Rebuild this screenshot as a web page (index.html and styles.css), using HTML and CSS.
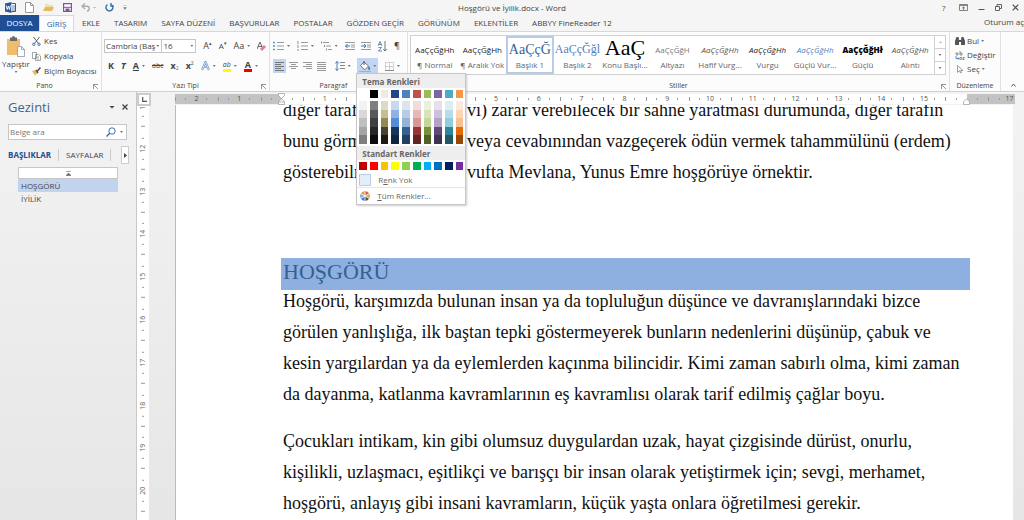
FILE: index.html
```html
<!DOCTYPE html>
<html lang="tr">
<head>
<meta charset="utf-8">
<title>Hoşgörü ve İyilik.docx - Word</title>
<link rel="stylesheet" href="styles.css">
</head>
<body>
<div class="app">
  <header class="titlebar">
    <div class="quick">
      <svg width="11" height="11" viewBox="0 0 11 11"><path d="M0 1.5L6.500 0v11L0 9.500z" fill="#2b579a"/><path d="M6.500 1.500h4v8h-4" fill="#fff" stroke="#2b579a"/><path d="M7 4h3M7 6h3M7 8h3" stroke="#2b579a" stroke-width=".7"/><path d="M1.200 3.500l1 4 1.100-3.500 1.100 3.500 1-4" fill="none" stroke="#fff" stroke-width=".9"/></svg>
      <button aria-label="Yeni"><svg width="9" height="11" viewBox="0 0 9 11"><path d="M.5.5h5l3 3v7h-8zM5.500.5v3h3" fill="#fff" stroke="#999"/></svg></button>
      <button aria-label="Aç"><svg width="11" height="9" viewBox="0 0 11 9"><path d="M2 1h3l1 1h4v3H2z" fill="#f3dfae"/><path d="M0 8l2-4h9L9 8z" fill="#e5b95c"/></svg></button>
      <button aria-label="Kaydet"><svg width="9" height="9" viewBox="0 0 9 9"><path d="M.6.600h7.800v7.800H.6z" fill="#fff" stroke="#80539f" stroke-width="1.200"/><path d="M2.500 5.500h4v3h-4z" fill="#80539f"/><path d="M1 4.300h7" stroke="#80539f"/></svg></button>
      <button class="wide" aria-label="Geri al"><svg width="15" height="9" viewBox="0 0 15 9"><path d="M4 .5L1 3.200 4 6M1 3.200h5c3 0 3 4.500 0 4.800" fill="none" stroke="#a9adb3" stroke-width="1.400"/><path d="M12 4h3l-1.500 1.500z" fill="#aaa"/></svg></button>
      <button aria-label="Yinele"><svg width="9" height="9" viewBox="0 0 9 9"><path d="M6 1.300A3.500 3.500 0 1 1 2.500 1.500M6 0v3h2.800" fill="none" stroke="#2f6fab" stroke-width="1.400"/></svg></button>
      <button aria-label="Özelleştir"><svg width="4" height="5" viewBox="0 0 4 5"><path d="M.5.5h3M.5 2.500h3L2 4.500z" fill="#666" stroke="#888" stroke-width=".4"/></svg></button>
    </div>
    <div class="doctitle">Hoşgörü ve İyilik.docx - Word</div>
    <div class="winbtns">
      <button aria-label="Yardım">?</button>
      <button aria-label="Şerit görünümü"><svg width="9" height="7" viewBox="0 0 9 7"><path d="M.5.5h8v6h-8zM1 1.500h7M4.500 6V3M3 4.300L4.500 3 6 4.300" fill="none" stroke="#666" stroke-width=".8"/></svg></button>
      <button aria-label="Simge durumuna küçült"><svg width="7" height="7" viewBox="0 0 7 7"><path d="M.5 5.500h6" stroke="#555"/></svg></button>
      <button aria-label="Geri yükle"><svg width="7" height="7" viewBox="0 0 7 7"><path d="M.5 2.500h4v4h-4zM2 2.500v-2h4.500v4H4.500" fill="none" stroke="#555" stroke-width=".9"/></svg></button>
      <button aria-label="Kapat"><svg width="7" height="7" viewBox="0 0 7 7"><path d="M.7.700l5.600 5.600M6.300.700L.7 6.300" stroke="#444" stroke-width="1.100"/></svg></button>
    </div>
  </header>
  <nav class="tabs">
    <button class="file">DOSYA</button>
    <button class="active">GİRİŞ</button>
    <button>EKLE</button>
    <button>TASARIM</button>
    <button>SAYFA DÜZENİ</button>
    <button>BAŞVURULAR</button>
    <button>POSTALAR</button>
    <button>GÖZDEN GEÇİR</button>
    <button>GÖRÜNÜM</button>
    <button>EKLENTİLER</button>
    <button>ABBYY FineReader 12</button>
    <a class="signin" href="#">Oturum aç</a>
  </nav>
  <section class="ribbon">
    <div class="group clipboard">
      <div class="body">
        <button class="paste"><svg width="20" height="21" viewBox="0 0 20 21"><path d="M1 3h13v16H1z" fill="#f0bd6e"/><path d="M4 1.500h2a1.500 1.500 0 0 1 3 0h2V5H4z" fill="#6b6b6b"/><path d="M11.500 10.500h4l3 3v7h-7zM15.500 10.500v3h3" fill="#fff" stroke="#8b98a8" stroke-width=".8"/></svg><span>Yapıştır</span><i class="caret"></i></button>
        <div class="cliplist">
          <button><svg width="9" height="9" viewBox="0 0 9 9"><path d="M1.500 0l5 6.500M7.500 0l-5 6.500" stroke="#666"/><circle cx="1.800" cy="7.300" r="1.200" fill="none" stroke="#3c72a8"/><circle cx="7" cy="7.300" r="1.200" fill="none" stroke="#3c72a8"/></svg>Kes</button>
          <button><svg width="9" height="9" viewBox="0 0 9 9"><path d="M.5.5h4v6h-4zM3.500 2.500h3l2 1.500v4.500h-5zM5 5h2M5 7h2" fill="#fff" stroke="#8a8f96" stroke-width=".8"/></svg>Kopyala</button>
          <button><svg width="9" height="9" viewBox="0 0 9 9"><path d="M0 4l4-1 2 3-3 2.500z" fill="#eeb759"/><path d="M4 3l2 3M5.500 4L8.500.5" stroke="#555" stroke-width="1.500"/></svg>Biçim Boyacısı</button>
        </div>
      </div>
      <div class="label">Pano<i class="launch"></i></div>
    </div>
    <div class="group font">
      <div class="body rows">
        <div class="row">
          <div class="combos"><button class="combo name">Cambria (Baş<i class="caret"></i></button><button class="combo size"><span>16</span><i class="caret"></i></button></div>
          <button class="glyph">A<sup>▴</sup></button><button class="glyph small">A<sup>▾</sup></button>
          <button class="glyph">Aa<i class="caret"></i></button>
          <button><svg width="9" height="11" viewBox="0 0 9 11"><path d="M0 8L3 1l3 7M1 5.500h4" fill="none" stroke="#666"/><path d="M3 8l4-4 2 2-4 4z" fill="#e5799a"/></svg></button>
        </div>
        <div class="row fmt">
          <button><b>K</b></button><button><b><em>T</em></b></button><button><b><u>A</u></b><i class="caret"></i></button><button class="strike">abc</button><button><b>x</b><sub>2</sub></button><button><b>x</b><sup>2</sup></button>
          <button><svg width="9" height="10" viewBox="0 0 9 10"><path d="M1 9L4.500 1 8 9M2.500 6h4" fill="none" stroke="#5b92d0" stroke-width="2"/><path d="M1 9L4.500 1 8 9M2.500 6h4" fill="none" stroke="#fff" stroke-width=".7"/></svg><i class="caret"></i></button>
          <button class="hl"><span>ab</span><i class="caret"></i></button>
          <button class="fc"><b>A</b><i class="caret"></i></button>
        </div>
      </div>
      <div class="label">Yazı Tipi<i class="launch"></i></div>
    </div>
    <div class="group para">
      <div class="body rows">
        <div class="row">
          <button><svg width="11" height="10" viewBox="0 0 11 10"><path d="M0 1.500h2M0 5h2M0 8.500h2" stroke="#6b93bd" stroke-width="1.500"/><path d="M4 1.500h7M4 5h7M4 8.500h7" stroke="#999"/></svg><i class="caret"></i></button>
          <button><svg width="11" height="10" viewBox="0 0 11 10"><path d="M1 0v3M1 4v3M1 8v2" stroke="#6b93bd"/><path d="M4 1.500h7M4 5h7M4 8.500h7" stroke="#999"/></svg><i class="caret"></i></button>
          <button><svg width="11" height="10" viewBox="0 0 11 10"><path d="M0 1.500h1M3 5h1M5 8.500h1" stroke="#6b93bd" stroke-width="2"/><path d="M2 1.500h6M5 5h5M7 8.500h4" stroke="#999"/></svg><i class="caret"></i></button>
          <button><svg width="10" height="8" viewBox="0 0 10 8"><path d="M0 .5h10M6 3h4M6 5h4M0 7.500h10" stroke="#999"/><path d="M2.500 2L.5 4l2 2M.5 4H5" fill="none" stroke="#3c72b0"/></svg></button>
          <button><svg width="10" height="8" viewBox="0 0 10 8"><path d="M0 .5h10M6 3h4M6 5h4M0 7.500h10" stroke="#999"/><path d="M3 2l2 2-2 2M0 4h5" fill="none" stroke="#3c72b0"/></svg></button>
          <button><svg width="9" height="11" viewBox="0 0 9 11"><path d="M0 5l2-4.500L4 5M1 3.500h2M.5 6.500h3L.5 10h3.500" fill="none" stroke="#4d7fb8" stroke-width=".9"/><path d="M7 0v10M5.300 8L7 10l1.700-2" fill="none" stroke="#666" stroke-width=".9"/></svg></button>
          <button class="glyph">¶</button>
        </div>
        <div class="row">
          <div class="aligns">
            <button class="on"><svg width="9" height="9" viewBox="0 0 9 9"><path d="M0 .5h9M0 2.500h6M0 4.500h9M0 6.500h6M0 8.500h9" stroke="#777"/></svg></button>
            <button><svg width="9" height="9" viewBox="0 0 9 9"><path d="M0 .5h9M2 2.500h5M0 4.500h9M2 6.500h5" stroke="#999"/></svg></button>
            <button><svg width="9" height="9" viewBox="0 0 9 9"><path d="M0 .5h9M3 2.500h6M0 4.500h9M3 6.500h6" stroke="#999"/></svg></button>
            <button><svg width="9" height="9" viewBox="0 0 9 9"><path d="M0 .5h9M0 2.500h9M0 4.500h9M0 6.500h9M0 8.500h9" stroke="#999"/></svg></button>
          </div>
          <button><svg width="10" height="10" viewBox="0 0 10 10"><path d="M2 .5v9M.3 2.500L2 .5l1.700 2M.3 7.500L2 9.500l1.700-2" fill="none" stroke="#3c72b0" stroke-width=".9"/><path d="M5 1.500h5M5 4.500h5M5 7.500h5" stroke="#888"/></svg><i class="caret"></i></button>
          <div class="shade">
            <button class="on"><svg width="12" height="11" viewBox="0 0 12 11"><path d="M1.500 4.500L5 1l4.500 4-4 4z" fill="#fff" stroke="#555" stroke-width=".8"/><path d="M5 0v4" stroke="#555"/><path d="M10 5c2 2.500 1 4 0 4s-1.500-2 0-4z" fill="#4a7ebb"/><path d="M0 10.500h12" stroke="#8db3e2"/></svg><i class="caret"></i></button>
            <div class="palette">
              <h2>Tema Renkleri</h2>
              <div class="swatches">
                <i class="c-fff"></i><i class="c-000"></i><i class="c-eeece1"></i><i class="c-1f497d"></i><i class="c-4f81bd"></i><i class="c-c0504d"></i><i class="c-9bbb59"></i><i class="c-8064a2"></i><i class="c-4bacc6"></i><i class="c-f79646"></i>
              </div>
              <div class="swatches shades">
                <i class="s0"></i><i class="s1"></i><i class="s2"></i><i class="s3"></i><i class="s4"></i><i class="s5"></i><i class="s6"></i><i class="s7"></i><i class="s8"></i><i class="s9"></i>
              </div>
              <h2>Standart Renkler</h2>
              <div class="swatches">
                <i class="d0"></i><i class="d1"></i><i class="d2"></i><i class="d3"></i><i class="d4"></i><i class="d5"></i><i class="d6"></i><i class="d7"></i><i class="d8"></i><i class="d9"></i>
              </div>
              <button class="item"><i class="none"></i><span>R<u>e</u>nk Yok</span></button>
              <button class="item more"><svg width="12" height="12" viewBox="0 0 12 12"><path d="M6 6V1a5 5 0 0 1 4.300 2.500z" fill="#c9645c"/><path d="M6 6l4.300-2.500a5 5 0 0 1 0 5z" fill="#e8a33d"/><path d="M6 6l4.300 2.500A5 5 0 0 1 6 11z" fill="#555"/><path d="M6 6v5a5 5 0 0 1-4.300-2.500z" fill="#4a7ebb"/><path d="M6 6L1.700 8.500a5 5 0 0 1 0-5z" fill="#7eb0dc"/><path d="M6 6L1.700 3.500A5 5 0 0 1 6 1z" fill="#e79a52"/><path d="M6 1v10M1.700 3.500l8.600 5M1.700 8.500l8.600-5" stroke="#fff" stroke-width=".8"/></svg><span><u>T</u>üm Renkler...</span></button>
            </div>
          </div>
          <button><svg width="9" height="9" viewBox="0 0 9 9"><path d="M.5.5h8v8h-8zM4.500.5v8M.5 4.500h8" fill="none" stroke="#aaa" stroke-dasharray="1 1"/><path d="M0 8.500h9" stroke="#888"/></svg><i class="caret"></i></button>
        </div>
      </div>
      <div class="label">Paragraf</div>
    </div>
    <div class="group styles">
      <div class="body">
        <div class="gallery">
          <button><span class="sample">AaÇçĞğHh</span><span>¶ Normal</span></button>
          <button><span class="sample">AaÇçĞğHh</span><span>¶ Aralık Yok</span></button>
          <button class="sel"><span class="sample h1">AaÇçĞ</span><span>Başlık 1</span></button>
          <button><span class="sample h2">AaÇçĞğl</span><span>Başlık 2</span></button>
          <button><span class="sample ttl">AaÇ</span><span>Konu Başlı...</span></button>
          <button><span class="sample sub">AaÇçĞğH</span><span>Altyazı</span></button>
          <button><span class="sample it soft">AaÇçĞğHh</span><span>Hafif Vurg...</span></button>
          <button><span class="sample it">AaÇçĞğHh</span><span>Vurgu</span></button>
          <button><span class="sample it blue">AaÇçĞğHh</span><span>Güçlü Vur...</span></button>
          <button><span class="sample bold">AaÇçĞğHł</span><span>Güçlü</span></button>
          <button><span class="sample it soft">AaÇçĞğHh</span><span>Alıntı</span></button>
          <div class="scroller"><button aria-label="Yukarı"><i class="caret up"></i></button><button aria-label="Aşağı"><i class="caret"></i></button><button aria-label="Diğer"><i class="caret"></i></button></div>
        </div>
      </div>
      <div class="label">Stiller<i class="launch"></i></div>
    </div>
    <div class="group edit">
      <div class="body">
        <button><svg width="10" height="8" viewBox="0 0 10 8"><path d="M0 8V4l1.500-4h2L4 3h2l.5-3h2L10 4v4H6V5H4v3z" fill="#555"/></svg>Bul<i class="caret"></i></button>
        <button><svg width="10" height="9" viewBox="0 0 10 9"><path d="M1 3.500V2h2v2H1M5 0v4h2V2H5M5 6.500h2V9H5zM10 6.500H8.500V9H10" fill="none" stroke="#777" stroke-width=".8"/><path d="M1 5v2.500h3M3 6.500l1 1-1 1" fill="none" stroke="#3c72b0" stroke-width=".8"/></svg>Değiştir</button>
        <button><svg width="10" height="9" viewBox="0 0 10 9"><path d="M2.500.5v7l2-2 1 2.500 1-.5-1-2H8z" fill="#fff" stroke="#888" stroke-width=".8"/></svg>Seç<i class="caret"></i></button>
      </div>
      <div class="label">Düzenleme</div>
    </div>
    <button class="collapse" aria-label="Şeridi daralt"><svg width="5" height="4" viewBox="0 0 5 4"><path d="M.5 3.500l2-2.500 2 2.500" fill="none" stroke="#555"/></svg></button>
  </section>
  <main class="work">
    <aside class="navpane">
      <div class="navhead"><h1>Gezinti</h1><button aria-label="Seçenekler"><i class="caret big"></i></button><button aria-label="Kapat"><svg width="6" height="6" viewBox="0 0 6 6"><path d="M.5.5l5 5M5.500.5l-5 5" stroke="#444" stroke-width="1.300"/></svg></button></div>
      <div class="search"><input type="text" placeholder="Belge ara" aria-label="Belge ara"><svg width="10" height="10" viewBox="0 0 10 10"><circle cx="6" cy="4" r="3.200" fill="none" stroke="#3c72b0"/><path d="M3.700 6.300L.5 9.500" stroke="#3c72b0" stroke-width="1.500"/></svg><i class="caret"></i></div>
      <div class="navtabs"><button class="cur">BAŞLIKLAR</button><button>SAYFALAR</button><button class="next" aria-label="İleri"><svg width="3" height="5" viewBox="0 0 3 5"><path d="M0 0l3 2.500L0 5z" fill="#444"/></svg></button></div>
      <div class="tree">
        <button class="top" aria-label="Başa git"><svg width="5" height="5" viewBox="0 0 5 5"><path d="M0 .5h5M0 4.500L2.500 2 5 4.500z" fill="#666" stroke="#666" stroke-width=".6"/></svg></button>
        <button class="hit">HOŞGÖRÜ</button>
        <button>İYİLİK</button>
      </div>
    </aside>
    <div class="vcol">
      <div class="tabstop"><svg width="5" height="5" viewBox="0 0 5 5"><path d="M.7 0v4.300H5" fill="none" stroke="#555" stroke-width="1.200"/></svg></div>
      <div class="vclip"><div class="vruler"><span>11</span><span>12</span><span>13</span><span>14</span><span>15</span><span>16</span><span>17</span><span>18</span><span>19</span><span>20</span></div></div>
    </div>
    <div class="canvas">
      <div class="hclip">
        <div class="hruler"><span>2</span><span>1</span><span class="mark"><svg width="7" height="12" viewBox="0 0 7 12"><path d="M.5.5h6v2l-3 3-3-3zM3.500 6l3 2.500v3h-6v-3zM.5 9h6" fill="#fff" stroke="#999" stroke-width=".7"/></svg></span><span>1</span><span>2</span><span>3</span><span>4</span><span>5</span><span>6</span><span>7</span><span>8</span><span>9</span><span>10</span><span>11</span><span>12</span><span>13</span><span>14</span><span>15</span><span class="mark"><svg width="7" height="12" viewBox="0 0 7 12"><path d="M3.500 6l3 2.500v3h-6v-3z" fill="#fff" stroke="#999" stroke-width=".7"/></svg></span><span>17</span></div>
      </div>
      <article class="page">
        <p class="first"><span class="lead">diğer taraf</span>vi) zarar verebilecek bir sahne yaratması durumunda, diğer tarafın<br><span class="lead">bunu görm</span>veya cevabınından vazgeçerek ödün vermek tahammülünü (erdem)<br><span class="lead">gösterebilm</span>vufta Mevlana, Yunus Emre hoşgörüye örnektir.</p>
        <h2>HOŞGÖRÜ</h2>
        <p>Hoşgörü, karşımızda bulunan insan ya da topluluğun düşünce ve davranışlarındaki bizce<br>görülen yanlışlığa, ilk baştan tepki göstermeyerek bunların nedenlerini düşünüp, çabuk ve<br>kesin yargılardan ya da eylemlerden kaçınma bilincidir. Kimi zaman sabırlı olma, kimi zaman<br>da dayanma, katlanma kavramlarının eş kavramlısı olarak tarif edilmiş çağlar boyu.</p>
        <p>Çocukları intikam, kin gibi olumsuz duygulardan uzak, hayat çizgisinde dürüst, onurlu,<br>kişilikli, uzlaşmacı, eşitlikçi ve barışçı bir insan olarak yetiştirmek için; sevgi, merhamet,<br>hoşgörü, anlayış gibi insani kavramların, küçük yaşta onlara öğretilmesi gerekir.</p>
      </article>
    </div>
  </main>
</div>
</body>
</html>
```

FILE: styles.css
```css
* { box-sizing: border-box; }
body { margin: 0; font-family: "Open Sans", "Noto Sans", sans-serif; font-size: 8px; line-height: 10px; color: #444; background: #f5f5f5; overflow: hidden; }
button { font: inherit; color: inherit; background: none; border: 0; padding: 0; margin: 0; display: flex; align-items: center; gap: 3px; white-space: nowrap; }
svg { display: block; flex: none; }
i { font-style: normal; flex: none; }
h1, h2, p { margin: 0; font-weight: normal; }
.app { height: 100vh; display: flex; flex-direction: column; overflow: hidden; }
.caret { width: 3px; height: 2px; background: #777; clip-path: polygon(0 0, 100% 0, 50% 100%); }
.caret.up { transform: rotate(180deg); background: #bbb; }
.caret.big { width: 6px; height: 3px; background: #444; }

.titlebar { height: 15px; display: grid; grid-template-columns: 1fr auto 1fr; align-items: center; padding: 0 5px; flex: none; }
.quick { display: flex; align-items: center; gap: 9px; }
.winbtns { display: flex; justify-content: flex-end; gap: 10px; }
.winbtns button { min-width: 7px; }

.tabs { height: 17px; display: flex; align-items: stretch; flex: none; border-bottom: 1px solid #d8d8d8; }
.tabs button { margin-right: 14px; }
.tabs .file { background: #1e4e94; color: #fff; width: 39px; justify-content: center; margin: 0; }
.tabs .active { width: 35px; justify-content: center; color: #2b5fa8; background: #fcfcfc; border: 1px solid #d8d8d8; border-bottom: 0; margin-right: 8px; }
.signin { margin-left: auto; flex: none; color: #444; text-decoration: none; white-space: nowrap; line-height: 14px; }

.ribbon { height: 60px; display: flex; flex: none; background: #fcfcfc; border-bottom: 1px solid #d0d0d0; }
.group { display: flex; flex-direction: column; border-right: 1px solid #e0e0e0; padding: 2px 0 1px; }
.group .body { flex: 1; min-height: 0; display: flex; }
.label { position: relative; text-align: center; font-size: 7px; line-height: 8px; }
.launch { position: absolute; right: 3px; top: 2px; width: 5px; height: 5px; border-left: 1px solid #999; border-top: 1px solid #999; background: linear-gradient(45deg, transparent 40%, #999 40% 60%, transparent 60%); }
.clipboard { width: 102px; }
.clipboard .label { padding-right: 12px; }
.paste { flex-direction: column; width: 32px; gap: 2px; padding-top: 2px; }
.cliplist { display: flex; flex-direction: column; gap: 5px; padding-top: 2px; }
.cliplist button { height: 10px; }
.font { width: 168px; }
.para { width: 138px; }
.rows { flex-direction: column; padding: 4px 3px 0 2px; gap: 4px; }
.row { display: flex; align-items: center; justify-content: space-between; height: 16px; }
.para .rows { padding: 4px 7px 0 3px; }
.combos { display: flex; }
.combo { height: 14px; border: 1px solid #c6c6c6; background: #fff; padding: 0 2px 0 1px; gap: 1px; }
.combo.name { min-width: 55px; justify-content: space-between; }
.combo.size { width: 34px; justify-content: space-between; border-left: 0; }
.glyph { font-size: 9px; }
.small { font-size: 8px; }
sup, sub { font-size: 5px; line-height: 5px; }
.row button sup { align-self: flex-start; margin-left: -3px; }
.row button sub { align-self: flex-end; margin-left: -3px; color: #3c72b0; }
.fmt { padding: 0 8px 0 4px; font-size: 9px; }
.strike { text-decoration: line-through; font-size: 7px; }
.hl span { font-size: 7px; font-style: italic; border-bottom: 3px solid #ff0; line-height: 8px; }
.fc b { border-bottom: 3px solid #e00; line-height: 9px; padding: 0 1px; }
.aligns { display: flex; gap: 1px; }
.aligns button { width: 13px; height: 14px; justify-content: center; }
.aligns .on, .shade > .on { background: #c2d5f2; }
.shade { position: relative; }
.shade > button { height: 16px; width: 21px; padding: 0 2px; gap: 2px; }
.para .label { padding-right: 10px; }

.palette { position: absolute; z-index: 5; left: -1px; top: 15px; width: 110px; background: #fff; border: 1px solid #c6c6c6; box-shadow: 1px 1px 2px #0003; color: #666; }
.palette h2 { background: #eee; font-size: 8px; font-weight: 700; line-height: 11px; padding: 2px 5px 1px; }
.swatches { display: grid; grid-template-columns: repeat(10, 1fr); gap: 3px; padding: 2px 2px 3px; }
.swatches i { height: 8px; }
.shades { padding: 0 2px 2px; }
.shades i { height: 43px; }
.c-fff { background: #fff; } .c-000 { background: #000; } .c-eeece1 { background: #eeece1; } .c-1f497d { background: #1f4788; } .c-4f81bd { background: #4f81bd; }
.c-c0504d { background: #c0504d; } .c-9bbb59 { background: #9bbb59; } .c-8064a2 { background: #8064a2; } .c-4bacc6 { background: #4bacc6; } .c-f79646 { background: #f79646; }
.s0 { background: linear-gradient(#f2f2f2 20%, #d8d8d8 20% 40%, #bfbfbf 40% 60%, #a5a5a5 60% 80%, #7f7f7f 80%); }
.s1 { background: linear-gradient(#7f7f7f 20%, #595959 20% 40%, #3f3f3f 40% 60%, #262626 60% 80%, #0c0c0c 80%); }
.s2 { background: linear-gradient(#ddd9c3 20%, #c4bd97 20% 40%, #938953 40% 60%, #494429 60% 80%, #1d1b10 80%); }
.s3 { background: linear-gradient(#c6d9f0 20%, #8db3e2 20% 40%, #548dd4 40% 60%, #17365d 60% 80%, #0f243e 80%); }
.s4 { background: linear-gradient(#dbe5f1 20%, #b8cce4 20% 40%, #95b3d7 40% 60%, #366092 60% 80%, #244061 80%); }
.s5 { background: linear-gradient(#f2dcdb 20%, #e5b9b7 20% 40%, #d99694 40% 60%, #953734 60% 80%, #632423 80%); }
.s6 { background: linear-gradient(#ebf1dd 20%, #d7e3bc 20% 40%, #c3d69b 40% 60%, #76923c 60% 80%, #4f6128 80%); }
.s7 { background: linear-gradient(#e5e0ec 20%, #ccc1d9 20% 40%, #b2a2c7 40% 60%, #5f497a 60% 80%, #3f3151 80%); }
.s8 { background: linear-gradient(#dbeef3 20%, #b7dde8 20% 40%, #92cddc 40% 60%, #31859b 60% 80%, #205867 80%); }
.s9 { background: linear-gradient(#fdeada 20%, #fbd5b5 20% 40%, #fac08f 40% 60%, #e36c09 60% 80%, #974806 80%); }
.d0 { background: #c00000; } .d1 { background: #f00; } .d2 { background: #ffc000; } .d3 { background: #ff0; } .d4 { background: #92d050; }
.d5 { background: #00b050; } .d6 { background: #00b0f0; } .d7 { background: #0070c0; } .d8 { background: #002060; } .d9 { background: #7030a0; }
.item { width: 100%; height: 15px; padding: 0 2px; gap: 7px; border-bottom: 1px solid #e6e6e6; }
.item.more { border: 0; height: 16px; gap: 6px; }
.none { width: 12px; height: 12px; background: #e4edfa; border: 1px solid #bccce4; }

.styles { flex: 1; min-width: 0; }
.styles .body { padding: 1px 3px 0 2px; }
.gallery { display: grid; grid-template-columns: repeat(11, minmax(0, 1fr)) 11px; width: 100%; height: 40px; background: #fff; border: 1px solid #d0d0d0; }
.gallery > button { flex-direction: column; gap: 0; border: 2px solid transparent; padding: 1px 0 0; color: #666; }
.gallery > .sel { border-color: #b8cbe8; }
.sample { height: 21px; line-height: 21px; font-size: 8px; color: #222; }
.h1, .h2, .ttl { font-family: "Liberation Serif", serif; color: #365f91; }
.h1 { font-size: 14px; }
.h2 { font-size: 12px; color: #4f81bd; }
.ttl { font-size: 22px; line-height: 18px; color: #000; }
.sub { color: #777; }
.it { font-style: italic; }
.soft { color: #555; }
.blue { color: #4f81bd; }
.bold { font-weight: 800; color: #000; }
.scroller { display: grid; border-left: 1px solid #d0d0d0; }
.scroller button { justify-content: center; border-bottom: 1px solid #d0d0d0; }
.scroller button:last-child { border: 0; }
.styles .label { padding-right: 0; }
.edit { width: 51px; }
.edit .body { flex-direction: column; gap: 4px; padding: 2px 0 0 5px; }
.edit .body button { height: 10px; gap: 2px; }
.collapse { width: 23px; align-items: flex-end; padding: 0 0 4px 10px; }

.work { flex: 1; min-height: 0; display: flex; background: linear-gradient(#f3f3f3, #e6e6e6); }
.navpane { width: 137px; padding: 5px 7px 0 8px; border-right: 1px solid #c8c8c8; flex: none; }
.navhead { display: flex; align-items: center; gap: 7px; height: 20px; padding: 0 1px 0 0; }
.navhead h1 { font-size: 13px; line-height: 18px; color: #44618f; margin-right: auto; }
.search { display: flex; align-items: center; gap: 4px; height: 16px; margin: 7px 2px 0 0; padding: 0 3px 0 1px; border: 1px solid #c6c6c6; background: #fff; }
.search input { flex: 1; min-width: 0; border: 0; padding: 0; background: none; font: inherit; outline: 0; }
.search input::placeholder { color: #777; opacity: 1; }
.navtabs { display: flex; align-items: center; height: 18px; margin-top: 6px; }
.navtabs button { height: 12px; padding-right: 7px; margin-right: 7px; border-right: 1px solid #ccc; }
.navtabs .cur { font-weight: 700; color: #1e4e94; }
.navtabs .next { width: 8px; height: 18px; padding: 0; margin: 0 0 0 auto; justify-content: center; border: 1px solid #ccc; background: #fff; }
.tree { padding: 3px 11px 0 10px; }
.tree button { width: 100%; height: 13px; padding: 0 3px; }
.tree .top { height: 12px; justify-content: center; border: 1px solid #c6c6c6; background: #fff; }
.tree .hit { background: #c2d3f0; }
.vcol { width: 13px; flex: none; padding-top: 1px; display: flex; flex-direction: column; }
.tabstop { width: 14px; height: 13px; border: 2px solid #ccc; background: #fff; display: grid; place-items: center; }
.vclip { width: 12px; flex: 1; min-height: 0; overflow: hidden; background: #fff; }
.vruler { height: 428px; margin-top: -22px; display: grid; grid-template-rows: repeat(10, 1fr); font-size: 7px; color: #666; }
.vruler span { writing-mode: vertical-rl; transform: rotate(180deg); display: grid; place-items: center; line-height: 12px;
  background: linear-gradient(#999, #999) center 0 / 4px 1px no-repeat, linear-gradient(#999, #999) center 25% / 2px 1px no-repeat, linear-gradient(#999, #999) center 75% / 2px 1px no-repeat; }
.canvas { flex: 1; min-width: 0; padding: 1px 11px 0 25px; display: flex; flex-direction: column; }
.hclip { height: 11px; flex: none; margin-bottom: 1px; overflow: clip; overflow-clip-margin: 2px; }
.hruler { width: calc(100% + 18px); height: 10px; margin-top: 1px; display: grid; grid-template-columns: repeat(20, 1fr); font-size: 7px; color: #555; background: linear-gradient(90deg, #c3c3c3 12.5%, #fff 12.5% 92.5%, #c3c3c3 92.5%); }
.hruler span { display: grid; place-items: center; line-height: 10px;
  background: linear-gradient(#999, #999) 0 center / 1px 4px no-repeat, linear-gradient(#999, #999) 25% center / 1px 2px no-repeat, linear-gradient(#999, #999) 75% center / 1px 2px no-repeat; }
.mark svg { margin: -1px 0; }
.page { flex: 1; min-height: 0; overflow: hidden; background: #fff; border-left: 1px solid #bbb; padding: 0 43px 0 105px; color: #111; font-family: "Liberation Serif", "Times New Roman", serif; font-size: 18px; line-height: 31px; white-space: nowrap; }
.page p { margin: 0 -40px 16px 2px; }
.page .first { margin-top: -10px; margin-bottom: 70px; }
.lead { display: inline-block; width: 184px; }
.page h2 { background: #8db0e0; color: #365f91; font-size: 22px; line-height: 28px; padding: 0 0 4px 2px; margin-bottom: -4px; }
```
